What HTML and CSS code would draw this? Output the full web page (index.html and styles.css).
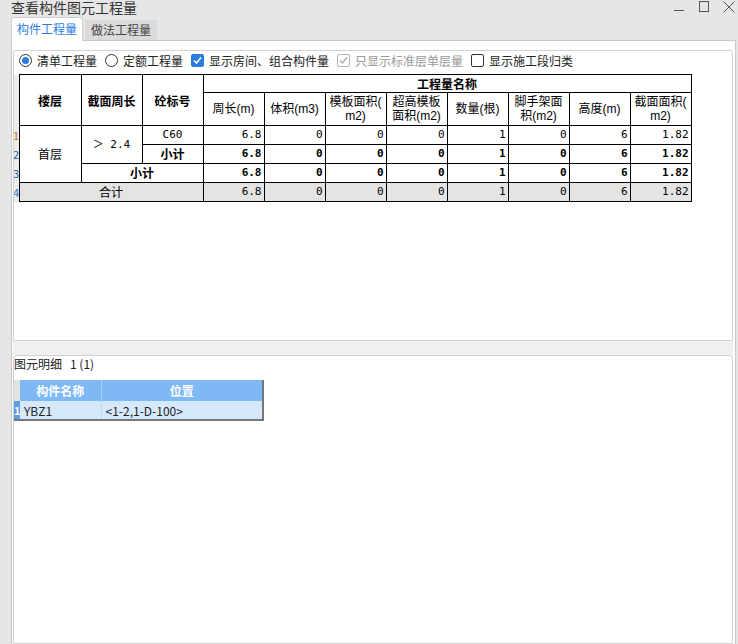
FILE: index.html
```html
<!DOCTYPE html>
<html>
<head>
<meta charset="utf-8">
<link rel="stylesheet" href="styles.css">
</head>
<body>
<div class="window">
  <div class="titlebar">
    <span class="title">查看构件图元工程量</span>
    <div class="controls">
      <svg width="12" height="12" viewBox="0 0 12 12"><path d="M1 9.5H11" stroke="#555" stroke-width="1"/></svg>
      <svg width="12" height="12" viewBox="0 0 12 12"><rect x="1.5" y="0.5" width="9" height="10" fill="none" stroke="#555" stroke-width="1"/></svg>
      <svg width="12" height="12" viewBox="0 0 12 12"><path d="M0.5 0.5L11.5 11.5M11.5 0.5L0.5 11.5" stroke="#555" stroke-width="1"/></svg>
    </div>
  </div>
  <div class="tabs">
    <div class="tab active">构件工程量</div>
    <div class="tab">做法工程量</div>
  </div>
  <div class="panel">
    <div class="sub upper">
      <div class="options">
        <label class="opt"><span class="radio on"></span>清单工程量</label>
        <label class="opt"><span class="radio"></span>定额工程量</label>
        <label class="opt"><span class="check on"><svg width="11" height="11" viewBox="0 0 11 11"><path d="M2 5.5L4.5 8L9 2.5" fill="none" stroke="#fff" stroke-width="1.6"/></svg></span>显示房间、组合构件量</label>
        <label class="opt disabled"><span class="check dis"><svg width="11" height="11" viewBox="0 0 11 11"><path d="M2 5.5L4.5 8L9 2.5" fill="none" stroke="#aaa" stroke-width="1.4"/></svg></span>只显示标准层单层量</label>
        <label class="opt"><span class="check"></span>显示施工段归类</label>
      </div>
      <table class="qty">
        <colgroup>
          <col class="c-strip"><col class="c-first">
          <col class="c"><col class="c"><col class="c"><col class="c"><col class="c"><col class="c"><col class="c"><col class="c"><col class="c"><col class="c">
        </colgroup>
        <tr class="h1">
          <td class="strip" rowspan="2"></td>
          <th rowspan="2">楼层</th>
          <th rowspan="2">截面周长</th>
          <th rowspan="2">砼标号</th>
          <th colspan="8">工程量名称</th>
        </tr>
        <tr class="h2">
          <td class="sh">周长(m)</td>
          <td class="sh">体积(m3)</td>
          <td class="sh"><span class="ln">模板面积(</span><span class="ln">m2)</span></td>
          <td class="sh"><span class="ln">超高模板</span><span class="ln">面积(m2)</span></td>
          <td class="sh">数量(根)</td>
          <td class="sh"><span class="ln">脚手架面</span><span class="ln">积(m2)</span></td>
          <td class="sh">高度(m)</td>
          <td class="sh"><span class="ln">截面面积(</span><span class="ln">m2)</span></td>
        </tr>
        <tr class="r">
          <td class="strip n1">1</td>
          <td class="ctr" rowspan="3">首层</td>
          <td class="ctr mono" rowspan="2">＞ 2.4</td>
          <td class="ctr mono">C60</td>
          <td class="num">6.8</td><td class="num">0</td><td class="num">0</td><td class="num">0</td><td class="num">1</td><td class="num">0</td><td class="num">6</td><td class="num">1.82</td>
        </tr>
        <tr class="r b">
          <td class="strip n2">2</td>
          <td class="ctr bold">小计</td>
          <td class="num">6.8</td><td class="num">0</td><td class="num">0</td><td class="num">0</td><td class="num">1</td><td class="num">0</td><td class="num">6</td><td class="num">1.82</td>
        </tr>
        <tr class="r b">
          <td class="strip n2">3</td>
          <td class="ctr bold" colspan="2">小计</td>
          <td class="num">6.8</td><td class="num">0</td><td class="num">0</td><td class="num">0</td><td class="num">1</td><td class="num">0</td><td class="num">6</td><td class="num">1.82</td>
        </tr>
        <tr class="r total">
          <td class="strip n4">4</td>
          <td class="ctr" colspan="3">合计</td>
          <td class="num">6.8</td><td class="num">0</td><td class="num">0</td><td class="num">0</td><td class="num">1</td><td class="num">0</td><td class="num">6</td><td class="num">1.82</td>
        </tr>
      </table>
    </div>
    <div class="splitter"></div>
    <div class="sub lower">
      <div class="label"><span>图元明细</span><span class="count">1 (1)</span></div>
      <table class="detail">
        <colgroup><col class="d-strip"><col class="d-name"><col class="d-pos"></colgroup>
        <tr class="dh"><td class="dstrip"></td><td class="hname">构件名称</td><td class="hpos">位置</td></tr>
        <tr class="dr"><td class="dstrip sel">1</td><td class="vname">YBZ1</td><td class="vpos">&lt;1-2,1-D-100&gt;</td></tr>
      </table>
    </div>
  </div>
</div>
</body>
</html>
```

FILE: styles.css
```css
html, body {
  margin: 0;
  padding: 0;
}
body {
  font-family: "Noto Sans CJK SC", "Noto Sans", sans-serif;
  background: #e6e6e6;
}
.window {
  width: 738px;
  height: 644px;
  overflow: hidden;
  background: #e6e6e6;
  display: flex;
  flex-direction: column;
}
.titlebar {
  height: 17px;
  display: flex;
  align-items: flex-start;
  justify-content: space-between;
  padding-left: 11px;
}
.title {
  font-family: "Liberation Sans", "Noto Sans CJK SC", sans-serif;
  font-size: 14px;
  line-height: 16px;
  color: #333;
  white-space: nowrap;
}
.controls {
  display: flex;
  gap: 13px;
  padding-right: 3px;
  padding-top: 1px;
}
.tabs {
  height: 23px;
  display: flex;
  align-items: flex-end;
  gap: 2px;
  padding-left: 11px;
  position: relative;
  z-index: 2;
}
.tab {
  width: 72px;
  height: 20px;
  box-sizing: border-box;
  font-size: 12px;
  line-height: 20px;
  text-align: center;
  color: #444;
  background: #dadada;
}
.tab.active {
  height: 24px;
  margin-bottom: -1px;
  line-height: 22px;
  background: #fff;
  color: #2b7de1;
  border: 1px solid #cfcfcf;
  border-bottom: none;
  border-radius: 3px 3px 0 0;
}
.panel {
  margin-left: 11px;
  width: 725px;
  flex: 1;
  box-sizing: border-box;
  background: #fff;
  border: 1px solid #c8c8c8;
  border-bottom: none;
  padding: 9px 2px 0 1px;
  display: flex;
  flex-direction: column;
}
.sub {
  border: 1px solid #d2d2d2;
  border-radius: 3px 3px 0 0;
  background: #fff;
}
.upper {
  height: 291px;
  box-sizing: border-box;
  display: flex;
  flex-direction: column;
}
.options {
  height: 18px;
  display: flex;
  align-items: center;
  gap: 8px;
  padding-left: 5px;
  font-size: 12px;
  color: #222;
  margin-bottom: 5px;
}
.opt {
  display: flex;
  align-items: center;
  gap: 5px;
  white-space: nowrap;
}
.opt.disabled {
  color: #999;
}
.radio {
  width: 13px;
  height: 13px;
  box-sizing: border-box;
  border: 1px solid #333;
  border-radius: 50%;
  display: flex;
  align-items: center;
  justify-content: center;
  background: #fff;
}
.radio.on::after {
  content: "";
  width: 7px;
  height: 7px;
  border-radius: 50%;
  background: #2b7de1;
}
.check {
  width: 13px;
  height: 13px;
  box-sizing: border-box;
  border: 1px solid #333;
  border-radius: 2px;
  display: flex;
  align-items: center;
  justify-content: center;
  background: #fff;
}
.check.on {
  background: #2b7de1;
  border-color: #2b7de1;
}
.check.dis {
  border-color: #b5b5b5;
}

/* quantity table */
.qty {
  border-collapse: collapse;
  table-layout: fixed;
  width: 677px;
  font-family: "DejaVu Sans Mono", "Noto Sans CJK SC", monospace;
  font-size: 12px;
  color: #000;
}
.c-strip { width: 5px; }
.c-first { width: 62px; }
.c { width: 61px; }
.qty th, .qty td {
  border: 1px solid #000;
  padding: 0;
  overflow: hidden;
  white-space: nowrap;
}
.qty th {
  font-family: "Noto Sans CJK SC", sans-serif;
  font-weight: bold;
  font-size: 12px;
}
.qty .strip {
  border: none;
  border-right: 1px solid #000;
  background: #ececec;
  font-family: "Noto Sans CJK SC", sans-serif;
  font-size: 11px;
  line-height: 12px;
  text-align: left;
  text-indent: -1px;
}
.qty .n1 { color: #c7701f; }
.qty .n2 { color: #2a5ca8; }
.qty .n4 { color: #2f78d0; }
.h1 { height: 18px; }
.h2 { height: 33px; }
.qty .sh {
  font-family: "Liberation Sans", "Noto Sans CJK SC", sans-serif;
  font-size: 12px;
  line-height: 14px;
  text-align: center;
  vertical-align: middle;
}
.qty .sh .ln {
  display: block;
  line-height: 14px;
}
.r { height: 19px; }
.qty .ctr {
  text-align: center;
  font-family: "Noto Sans CJK SC", sans-serif;
  line-height: 16px;
}
.qty .ctr.mono {
  font-family: "DejaVu Sans Mono", "Noto Sans CJK SC", monospace;
  font-size: 11px;
}
.qty .bold {
  font-weight: bold;
}
.qty .num {
  text-align: right;
  padding-right: 2px;
  font-size: 11px;
  line-height: 16px;
}
.r.b .num {
  font-weight: bold;
}
.r.total td {
  background: #e4e4e4;
}
.r.total .strip {
  background: #ececec;
}

.splitter {
  height: 14px;
  background: #f0f0f0;
  flex: none;
}
.lower {
  flex: 1;
}
.label {
  display: flex;
  gap: 8px;
  font-size: 12px;
  line-height: 16px;
  color: #222;
  margin-bottom: 8px;
}
.detail {
  border-collapse: collapse;
  table-layout: fixed;
  width: 249px;
  font-size: 12px;
  border-right: 2px solid #777;
  border-bottom: 2px solid #777;
}
.d-strip { width: 6px; }
.d-name { width: 81px; }
.d-pos { width: 162px; }
.detail td {
  padding: 0;
  white-space: nowrap;
  overflow: hidden;
}
.dh { height: 21px; }
.dr { height: 19px; }
.dstrip {
  background: #e2e2e2;
  font-size: 11px;
  line-height: 12px;
}
.dstrip.sel {
  background: #5b9de6;
  color: #fff;
  font-weight: bold;
}
.hname, .hpos {
  background: #7eb9f6;
  color: #fff;
  font-weight: bold;
  text-align: center;
}
.hname {
  border-right: 1px solid #a9d0fa;
}
.vname, .vpos {
  background: #d6e9fc;
  color: #222;
  padding-left: 4px !important;
}
.vname {
  border-right: 1px solid #c4d6ea;
}
```
